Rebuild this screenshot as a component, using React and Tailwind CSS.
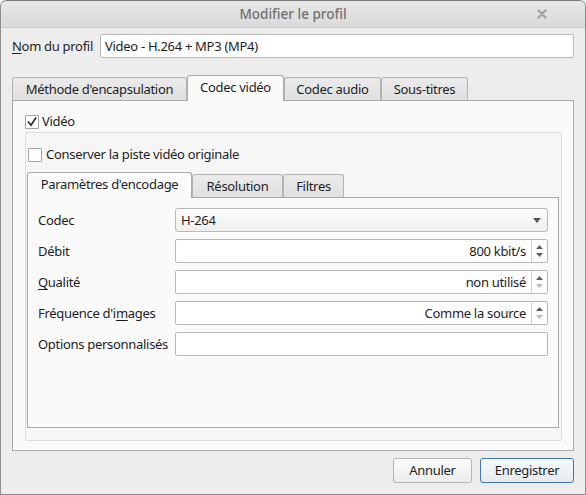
import React from "react";

const font = { fontFamily: '"Noto Sans", "Open Sans", sans-serif', letterSpacing: "-0.3px" };

function Check({ checked }) {
  return (
    <span className="w-[14px] h-[14px] bg-white border border-[#a3a3a3] rounded-[1px] flex items-center justify-center shrink-0">
      {checked && (
        <svg width="10" height="10" viewBox="0 0 10 10">
          <path d="M1.5 5.2 L4 8.2 L8.6 1.2" fill="none" stroke="#222" strokeWidth="1.6" strokeLinecap="square" />
        </svg>
      )}
    </span>
  );
}

function Tab({ label, w, selected }) {
  return selected ? (
    <div
      className="h-[26px] -mb-px relative z-10 bg-[#fafafa] border border-b-0 border-[#a9a9a9] rounded-t-[3px] flex items-center justify-center text-[#1e1e1e]"
      style={{ width: w }}
    >
      <span className="-mt-[1px]">{label}</span>
    </div>
  ) : (
    <div
      className="h-[23px] bg-gradient-to-b from-[#ebebeb] to-[#e0e0e0] border border-b-0 border-[#b4b4b4] rounded-t-[3px] flex items-center justify-center text-[#1e1e1e]"
      style={{ width: w }}
    >
      <span className="mt-[2px]">{label}</span>
    </div>
  );
}

function Spin({ value, downDisabled }) {
  return (
    <div className="h-[24px] bg-white border border-[#b8b8b8] rounded-[2px] flex items-center">
      <span className="flex-1 text-right pr-[5px] pt-[1px] text-[#1e1e1e]">{value}</span>
      <div className="w-[16px] h-full border-l border-[#d0d0d0] flex flex-col items-center justify-center gap-[4px]">
        <svg width="7" height="4" viewBox="0 0 7 4">
          <path d="M0 4 L3.5 0 L7 4 Z" fill="#5e5e5e" />
        </svg>
        <svg width="7" height="4" viewBox="0 0 7 4">
          <path d="M0 0 L3.5 4 L7 0 Z" fill={downDisabled ? "#b9b9b9" : "#5e5e5e"} />
        </svg>
      </div>
    </div>
  );
}

export default function App() {
  return (
    <div
      className="w-[586px] h-[495px] bg-[#ededed] border-x border-b border-[#8e8e8e] rounded-t-[6px] flex flex-col text-[13px] text-[#1e1e1e] overflow-hidden"
      style={font}
    >
      {/* title bar */}
      <div className="h-[28px] shrink-0 relative flex items-center justify-center bg-gradient-to-b from-[#e8e8e8] to-[#dadada] border-b border-[#cacaca] border-t border-t-[#7a7a7a] rounded-t-[6px]">
        <span className="text-[#707070] font-medium text-[13.5px] tracking-normal">Modifier le profil</span>
        <span className="absolute right-[38px] top-[8px]">
          <svg width="10" height="10" viewBox="0 0 10 10">
            <path d="M1.5 1.5 L8.5 8.5 M8.5 1.5 L1.5 8.5" stroke="#a0a0a0" strokeWidth="2.2" strokeLinecap="round" />
          </svg>
        </span>
      </div>

      {/* name row */}
      <div className="mt-[6px] pl-[11px] pr-[11px] flex items-center">
        <span className="w-[88px] shrink-0 pt-[1px]">
          <span className="underline underline-offset-2">N</span>om du profil
        </span>
        <div className="flex-1 h-[24px] bg-white border border-[#b8b8b8] rounded-[2px] flex items-center pl-[4px] pt-[1px]">
          Video - H.264 + MP3 (MP4)
        </div>
      </div>

      {/* main tab widget */}
      <div className="mt-[17px] pl-[11px] pr-[11px] flex flex-col">
        <div className="flex items-end h-[25px]">
          <Tab label="Méthode d'encapsulation" w={175} />
          <Tab label="Codec vidéo" w={97} selected />
          <Tab label="Codec audio" w={97} />
          <Tab label="Sous-titres" w={87} />
        </div>
        <div className="h-[351px] bg-[#fafafa] border border-[#a9a9a9] flex flex-col pl-[12px] pr-[11px] pt-[13px] pb-[9px]">
          <label className="flex items-center gap-[3px] h-[15px]">
            <Check checked />
            <span className="pt-[1px]">Vidéo</span>
          </label>
          <div className="mt-[3px] flex-1 bg-[#f6f6f6] border border-[#dedede] rounded-[2px] flex flex-col pl-[1px] pr-[2px] pt-[14px] pb-[12px]">
            <label className="flex items-center gap-[4px] h-[15px] pl-[1px]">
              <Check />
              <span className="pt-[1px]">Conserver la piste vidéo originale</span>
            </label>
            <div className="mt-[10px] flex items-end h-[25px]">
              <Tab label="Paramètres d'encodage" w={165} selected />
              <Tab label="Résolution" w={91} />
              <Tab label="Filtres" w={61} />
            </div>
            <div className="flex-1 bg-[#fafafa] border border-[#a9a9a9] pl-[10px] pr-[10px] pt-[10px]">
              <div className="grid grid-cols-[131px_1fr] gap-x-[6px] gap-y-[7px] items-center">
                <span className="pt-[1px]">Codec</span>
                <div className="h-[24px] bg-gradient-to-b from-[#fcfcfc] to-[#efefef] border border-[#b8b8b8] rounded-[3px] flex items-center pl-[5px] pr-[6px]">
                  <span className="flex-1 pt-[1px]">H-264</span>
                  <svg width="8" height="5" viewBox="0 0 8 5">
                    <path d="M0 0 L4 5 L8 0 Z" fill="#555" />
                  </svg>
                </div>
                <span className="pt-[1px]">Débit</span>
                <Spin value="800 kbit/s" />
                <span className="pt-[1px]">
                  <span className="underline underline-offset-2">Q</span>ualité
                </span>
                <Spin value="non utilisé" downDisabled />
                <span className="pt-[1px]">
                  Fréquence d'i<span className="underline underline-offset-2">m</span>ages
                </span>
                <Spin value="Comme la source" downDisabled />
                <span className="whitespace-nowrap pt-[1px]">Options personnalisés</span>
                <div className="h-[24px] bg-white border border-[#b8b8b8] rounded-[2px]" />
              </div>
            </div>
          </div>
        </div>
      </div>

      {/* buttons */}
      <div className="mt-[7px] pr-[11px] flex justify-end gap-[8px]">
        <button className="w-[79px] h-[25px] bg-gradient-to-b from-[#fbfbfb] to-[#ececec] border border-[#b5b5b5] rounded-[3px] text-[13px] pt-[1px]" style={font}>
          Annuler
        </button>
        <button className="w-[94px] h-[25px] bg-gradient-to-b from-[#f7f9fb] to-[#e6eaee] border border-[#3f78b5] rounded-[3px] text-[13px] pt-[1px]" style={font}>
          Enregistrer
        </button>
      </div>
    </div>
  );
}
